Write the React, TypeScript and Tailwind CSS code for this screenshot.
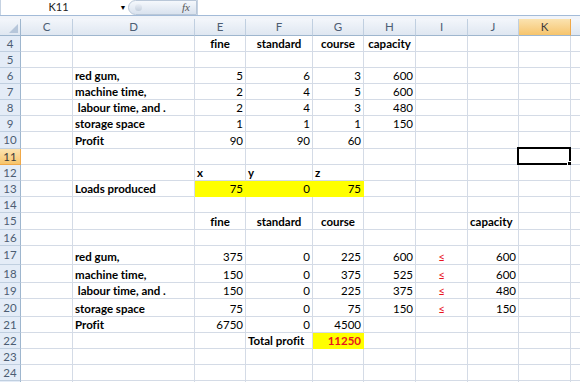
import React from 'react';

type Cell = {
  v: string;
  align?: 'left' | 'right' | 'center';
  bold?: boolean;
  red?: boolean;
  fill?: boolean;
};

const cols = [
  { key: 'C', w: 'w-[52px]', label: 'C' },
  { key: 'D', w: 'w-[122px]', label: 'D' },
  { key: 'E', w: 'w-[51px]', label: 'E' },
  { key: 'F', w: 'w-[67px]', label: 'F' },
  { key: 'G', w: 'w-[51px]', label: 'G' },
  { key: 'H', w: 'w-[52px]', label: 'H' },
  { key: 'I', w: 'w-[52px]', label: 'I' },
  { key: 'J', w: 'w-[51px]', label: 'J' },
  { key: 'K', w: 'w-[52px]', label: 'K' },
  { key: 'L', w: 'w-[64px]', label: '' },
];

const rowHeights: Record<number, string> = {
  4: 'h-[16px]', 5: 'h-[16px]', 6: 'h-[16px]', 7: 'h-[16px]', 8: 'h-[16px]', 9: 'h-[16px]',
  10: 'h-[17px]', 11: 'h-[16px]', 12: 'h-[16px]', 13: 'h-[16px]', 14: 'h-[16px]', 15: 'h-[17px]',
  16: 'h-[16px]', 17: 'h-[19px]', 18: 'h-[18px]', 19: 'h-[16px]', 20: 'h-[18px]', 21: 'h-[16px]',
  22: 'h-[16px]', 23: 'h-[16px]', 24: 'h-[16px]', 25: 'h-[16px]',
};

const n = (v: string): Cell => ({ v, align: 'right' });
const lbl = (v: string): Cell => ({ v, bold: true });
const hd = (v: string): Cell => ({ v, bold: true, align: 'center' });
const le: Cell = { v: '≤', align: 'center', red: true };

const data: Record<number, Record<string, Cell>> = {
  4: { E: hd('fine'), F: hd('standard'), G: hd('course'), H: hd('capacity') },
  6: { D: lbl('red gum,'), E: n('5'), F: n('6'), G: n('3'), H: n('600') },
  7: { D: lbl('machine time,'), E: n('2'), F: n('4'), G: n('5'), H: n('600') },
  8: { D: lbl('\u00a0labour time, and .'), E: n('2'), F: n('4'), G: n('3'), H: n('480') },
  9: { D: lbl('storage space'), E: n('1'), F: n('1'), G: n('1'), H: n('150') },
  10: { D: lbl('Profit'), E: n('90'), F: n('90'), G: n('60') },
  12: { E: lbl('x'), F: lbl('y'), G: lbl('z') },
  13: {
    D: lbl('Loads produced'),
    E: { v: '75', align: 'right', fill: true },
    F: { v: '0', align: 'right', fill: true },
    G: { v: '75', align: 'right', fill: true },
  },
  15: { E: hd('fine'), F: hd('standard'), G: hd('course'), J: lbl('capacity') },
  17: { D: lbl('red gum,'), E: n('375'), F: n('0'), G: n('225'), H: n('600'), I: le, J: n('600') },
  18: { D: lbl('machine time,'), E: n('150'), F: n('0'), G: n('375'), H: n('525'), I: le, J: n('600') },
  19: { D: lbl('\u00a0labour time, and .'), E: n('150'), F: n('0'), G: n('225'), H: n('375'), I: le, J: n('480') },
  20: { D: lbl('storage space'), E: n('75'), F: n('0'), G: n('75'), H: n('150'), I: le, J: n('150') },
  21: { D: lbl('Profit'), E: n('6750'), F: n('0'), G: n('4500') },
  22: { F: lbl('Total profit'), G: { v: '11250', align: 'right', bold: true, red: true, fill: true } },
};

const rows = Array.from({ length: 22 }, (_, i) => i + 4);

function FormulaBar() {
  return (
    <div className="flex h-[16px] border-b border-[#a3bbd8] bg-white">
      <div className="relative flex w-[118px] items-center justify-center border-l border-[#c5d2e2] text-[11px] text-[#222]">
        <span className="ml-[-2px]">K11</span>
      </div>
      <div className="flex w-[10px] items-center justify-center text-[7px] text-black">▼</div>
      <div className="flex h-[15px] w-[69px] items-center justify-between rounded-l-full border border-[#b9c7d8] bg-gradient-to-b from-[#f5f8fc] to-[#d9e2ee] pl-[6px] pr-[6px]">
        <span className="h-[7px] w-[7px] rounded-full bg-gradient-to-b from-[#e9eef5] to-[#c4cfdd]" />
        <span className="font-['Liberation_Serif',serif] text-[11px] italic text-[#555]">fx</span>
      </div>
      <div className="flex-1 border-l border-[#c5d2e2]" />
    </div>
  );
}

function HeaderRow() {
  return (
    <div className="flex h-[17px]">
      <div className="relative w-[21px] shrink-0 border-r border-b border-[#9eb6ce] bg-gradient-to-b from-[#f3f6fb] to-[#dfe7f1]">
        <div className="absolute bottom-[2px] right-[2px] h-0 w-0 border-l-[9px] border-l-transparent [border-bottom:9px_solid_#b6c6da]" />
      </div>
      {cols.map((c) => (
        <div
          key={c.key}
          className={`${c.w} flex shrink-0 items-center justify-center border-r border-b text-[11.5px] ${
            c.key === 'K'
              ? 'border-[#f0a848] bg-gradient-to-b from-[#fbe3b0] to-[#f6c46b] text-[#3b3b3b]'
              : 'border-[#c0cfe0] bg-gradient-to-b from-[#f3f6fb] to-[#dfe7f1] text-[#4c5d73]'
          } border-b-[#9eb6ce]`}
        >
          {c.label}
        </div>
      ))}
    </div>
  );
}

function DataRow({ r }: { r: number }) {
  const cells = data[r] || {};
  const sel = r === 11;
  return (
    <div className={`flex ${rowHeights[r]}`}>
      <div
        className={`flex w-[21px] shrink-0 items-center justify-center border-r border-b text-[11.5px] ${
          sel
            ? 'border-[#f0a848] bg-gradient-to-b from-[#fbe3b0] to-[#f6c46b] text-[#3b3b3b]'
            : 'border-[#9eb6ce] border-b-[#c0cfe0] bg-[#e4ecf7] text-[#4c5d73]'
        }`}
      >
        {r < 25 ? r : ''}
      </div>
      {cols.map((c) => {
        const cell = cells[c.key];
        const fill = cell?.fill;
        const justify =
          cell?.align === 'right' ? 'justify-end pr-[2px]' : cell?.align === 'center' ? 'justify-center' : 'justify-start pl-[2px]';
        return (
          <div
            key={c.key}
            className={`${c.w} relative flex shrink-0 items-end whitespace-pre border-r border-b pb-[1px] leading-[13px] ${justify} ${
              fill ? 'border-[#ffff00] bg-[#ffff00]' : 'border-[#d4dbe6] bg-white'
            } ${cell?.bold ? 'font-bold' : ''} ${cell?.red ? 'text-[#e8141e]' : 'text-black'}`}
          >
            {cell?.v}
            {sel && c.key === 'K' && (
              <div className="absolute -left-[2px] -top-[2px] h-[18px] w-[54px] border-2 border-black">
                <div className="absolute -bottom-[3px] -right-[3px] h-[5px] w-[5px] border border-white bg-black" />
              </div>
            )}
          </div>
        );
      })}
    </div>
  );
}

export default function App() {
  return (
    <div className="h-[382px] w-[580px] overflow-hidden bg-white font-['Lato',sans-serif] text-[11.5px] [font-variant-ligatures:none]">
      <FormulaBar />
      <div className="h-[3px] bg-[#f1f4f9]" />
      <HeaderRow />
      {rows.map((r) => (
        <DataRow key={r} r={r} />
      ))}
    </div>
  );
}
